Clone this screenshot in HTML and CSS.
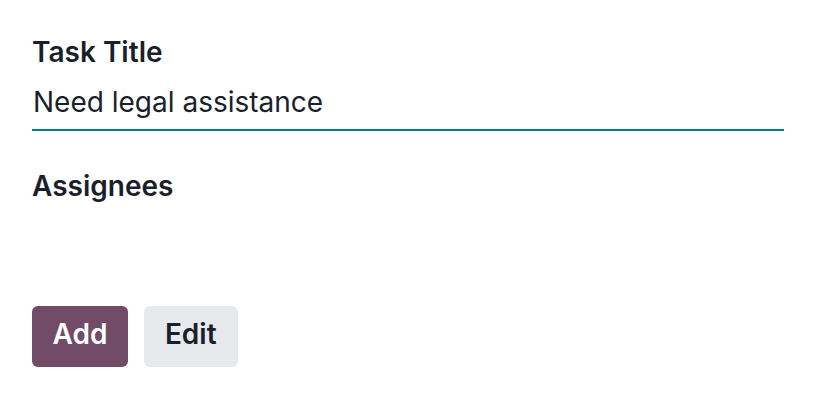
FILE: index.html
```html
<!DOCTYPE html>
<html>
<head>
<meta charset="utf-8">
<link rel="stylesheet" href="styles.css">
</head>
<body>
<div class="form">
  <div class="field">
    <label class="label">Task Title</label>
    <div class="input">Need legal assistance</div>
  </div>
  <div class="field assignees">
    <label class="label">Assignees</label>
  </div>
  <div class="actions">
    <button class="btn btn-primary">Add</button>
    <button class="btn btn-secondary">Edit</button>
  </div>
</div>
</body>
</html>
```
FILE: styles.css
```css
html, body {
  margin: 0;
  padding: 0;
  background: #ffffff;
}
body {
  font-family: Inter, "Noto Sans", sans-serif;
  color: #1a1f2b;
}
.form {
  padding: 31px 32px 0 32px;
  width: 752px;
}
.label {
  display: block;
  font-size: 28px;
  font-weight: 600;
  line-height: 42px;
}
.input {
  font-size: 28px;
  line-height: 42px;
  padding: 8px 0 6px 1px;
  border-bottom: 2px solid #017e84;
}
.assignees {
  margin-top: 34px;
  height: 141px;
}
.actions {
  display: flex;
  gap: 16px;
}
.btn {
  font-family: Inter, "Noto Sans", sans-serif;
  font-size: 28px;
  font-weight: 600;
  line-height: 42px;
  border: none;
  border-radius: 6px;
  height: 61px;
  padding: 7px 21px 12px 21px;
  cursor: pointer;
}
.btn-primary {
  background: #714b67;
  color: #ffffff;
  padding-left: 20.5px;
  padding-right: 20.5px;
}
.btn-secondary {
  background: #e7e9ed;
  color: #1a1f2b;
}
```
